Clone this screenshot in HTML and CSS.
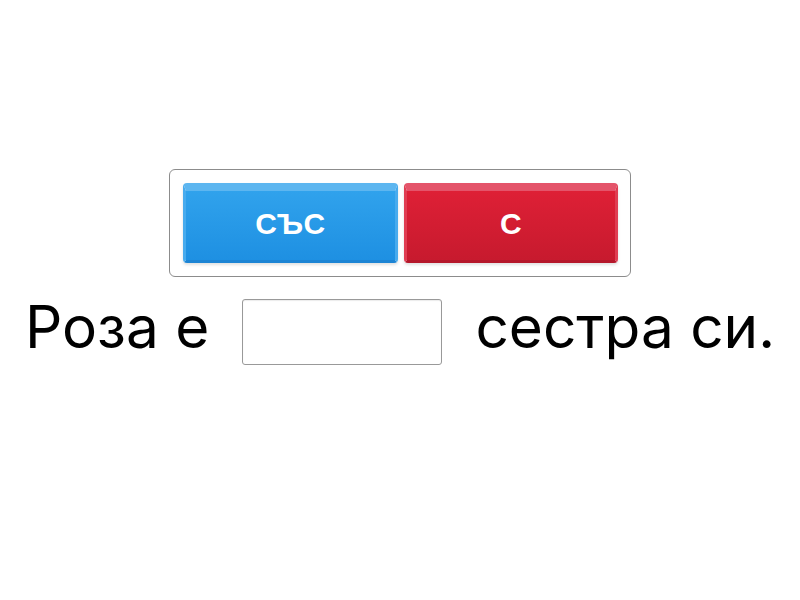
FILE: index.html
```html
<!DOCTYPE html>
<html lang="bg">
<head>
<meta charset="utf-8">
<link rel="stylesheet" href="styles.css">
</head>
<body>
<main class="stage">
  <div class="choices">
    <button class="btn btn-blue">СЪС</button>
    <button class="btn btn-red">С</button>
  </div>
  <p class="sentence"><span class="word">Роза е</span><span class="blank"></span><span class="word">сестра си.</span></p>
</main>
</body>
</html>
```
FILE: styles.css
```css
html, body { margin: 0; padding: 0; background: #fff; }
body { width: 800px; height: 600px; overflow: hidden; font-family: "Inter", "Liberation Sans", sans-serif; }
.stage { display: flex; flex-direction: column; align-items: center; padding-top: 169px; }
.choices {
  display: flex; gap: 6px;
  padding: 13px 12px 12px 13px;
  border: 1px solid #8c8c8c; border-radius: 6px;
  box-sizing: border-box; width: 462px; height: 108px;
}
.btn {
  flex: 1; height: 80px; box-sizing: border-box;
  font-family: "Liberation Sans", Arial, sans-serif; font-weight: bold; font-size: 30px;
  letter-spacing: 0.5px;
  color: #fff; border-radius: 4px; padding: 0 0 4px 0.5px; margin: 0;
  border-style: solid; border-width: 8px 3px 3px 3px;
  box-shadow: 0 2px 3px rgba(0,0,0,0.12);
  display: flex; align-items: center; justify-content: center;
}
.btn-blue {
  background: linear-gradient(#30a2ec, #1e90e2);
  border-color: #5db6f0 #47abee #1c84d4 #47abee;
}
.btn-red {
  background: linear-gradient(#de2036, #c71a2e);
  border-color: #e4546a #e03d52 #b5172a #e03d52;
}
.sentence {
  margin: 22px 0 0; display: flex; align-items: center; gap: 33px;
  font-size: 58.5px; color: #000; line-height: 66px;
}
.word { position: relative; top: -5px; }
.blank {
  width: 200px; height: 66px; box-sizing: border-box;
  border: 1px solid #999; border-radius: 3px; background: #fff;
  box-shadow: inset 0 1px 1px rgba(0,0,0,0.08);
}
```
